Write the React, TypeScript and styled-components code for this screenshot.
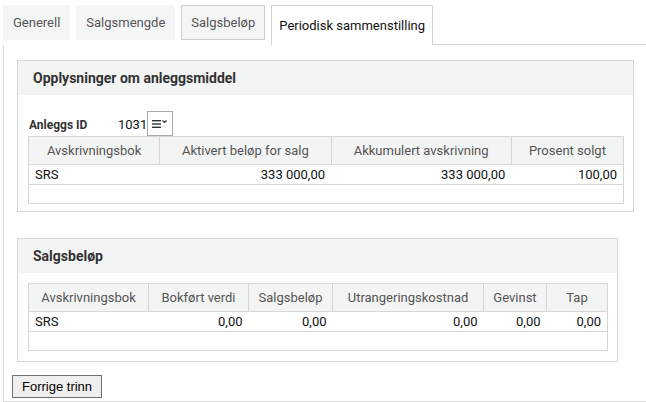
import React from 'react';
import styled, { createGlobalStyle } from 'styled-components';

const GlobalStyle = createGlobalStyle`
  html, body {
    margin: 0;
    padding: 0;
    background: #ffffff;
  }
  body {
    font-family: Roboto, 'Liberation Sans', Arial, sans-serif;
    color: #333333;
  }
`;

const Page = styled.div`
  width: 643px;
  padding: 5px 0 0 3px;
`;

const TabStrip = styled.div`
  display: flex;
  align-items: flex-start;
  column-gap: 6px;
  height: 40px;
`;

const Tab = styled.div<{ $active?: boolean; $outlined?: boolean }>`
  box-sizing: border-box;
  height: ${(p) => (p.$active ? '40px' : '35px')};
  padding: 0 ${(p) => (p.$active ? '7px' : '9px')};
  display: flex;
  align-items: center;
  font-size: 13px;
  color: ${(p) => (p.$active ? '#111111' : '#555555')};
  background: ${(p) => (p.$active ? '#ffffff' : '#f4f5f5')};
  border: 1px solid ${(p) => (p.$active ? '#d2d2d2' : p.$outlined ? '#cfcfcf' : '#f4f5f5')};
  border-bottom: ${(p) => (p.$active ? 'none' : undefined)};
  position: relative;
  z-index: 1;
`;

const TabFiller = styled.div`
  flex: 1;
  align-self: flex-end;
  height: 1px;
  margin-left: -6px;
  background: #d2d2d2;
`;

const Panel = styled.div`
  border-left: 1px solid #d9d9d9;
  border-bottom: 1px solid #d9d9d9;
  padding: 15px 0 3px 13px;
`;

const Section = styled.section<{ $width: number }>`
  width: ${(p) => p.$width}px;
  box-sizing: border-box;
  border: 1px solid #d6d6d6;
  margin-bottom: ${(p) => (p.$width > 610 ? '26px' : '13px')};
`;

const SectionHeader = styled.div`
  height: 34px;
  background: #f3f4f4;
  display: flex;
  align-items: center;
  padding-left: 15px;
  font-size: 14px;
  font-weight: bold;
  color: #333333;
`;

const SectionBody = styled.div<{ $top: number; $bottom: number }>`
  padding: ${(p) => p.$top}px 9px ${(p) => p.$bottom}px 10px;
`;

const FieldRow = styled.div`
  display: flex;
  align-items: center;
  height: 25px;
`;

const FieldLabel = styled.span`
  width: 89px;
  font-size: 12px;
  font-weight: bold;
  color: #333333;
  padding-left: 1px;
  padding-top: 2px;
`;

const FieldValue = styled.span`
  font-size: 13px;
  color: #111111;
  padding-top: 1px;
`;

const MenuButton = styled.button`
  box-sizing: border-box;
  width: 26px;
  height: 25px;
  padding: 0;
  margin: 0;
  border: 1px solid #a9a9a9;
  background: #ffffff;
  display: flex;
  align-items: center;
  justify-content: center;
`;

const Table = styled.table`
  width: 100%;
  border-collapse: collapse;
  table-layout: fixed;
  font-size: 13px;
`;

const HeadCell = styled.th`
  height: 27px;
  padding: 0 4px;
  background: #f3f4f4;
  border: 1px solid #d6d6d6;
  font-weight: normal;
  color: #555555;
  text-align: center;
  white-space: nowrap;
`;

const Cell = styled.td<{ $align?: 'left' | 'right' }>`
  height: 19px;
  padding: 0 6px;
  border-top: 1px solid #d6d6d6;
  border-bottom: 1px solid #d6d6d6;
  text-align: ${(p) => p.$align || 'right'};
  color: #111111;
  white-space: nowrap;
  &:first-child {
    border-left: 1px solid #d6d6d6;
  }
  &:last-child {
    border-right: 1px solid #d6d6d6;
  }
`;

const EmptyCell = styled.td`
  height: 16px;
  border: 1px solid #d6d6d6;
`;

const Footer = styled.div`
  margin-left: -5px;
`;

const StepButton = styled.button`
  box-sizing: border-box;
  height: 23px;
  padding: 0 9px;
  font-family: 'Liberation Sans', Arial, sans-serif;
  font-size: 13px;
  color: #000000;
  background: #efefef;
  border: 1px solid #707070;
`;

const MenuIcon = () => (
  <svg width="18" height="10" viewBox="0 0 18 10">
    <rect x="1" y="1" width="9" height="1.4" fill="#333" />
    <rect x="1" y="4.3" width="9" height="1.4" fill="#333" />
    <rect x="1" y="7.6" width="9" height="1.4" fill="#333" />
    <path d="M11.5 1.5 L13.5 3.5 L15.5 1.5" stroke="#333" strokeWidth="1.2" fill="none" />
  </svg>
);

type Column = { title: string; width: number };

const assetColumns: Column[] = [
  { title: 'Avskrivningsbok', width: 131 },
  { title: 'Aktivert beløp for salg', width: 171 },
  { title: 'Akkumulert avskrivning', width: 180 },
  { title: 'Prosent solgt', width: 112 },
];
const assetRow = ['SRS', '333 000,00', '333 000,00', '100,00'];

const saleColumns: Column[] = [
  { title: 'Avskrivningsbok', width: 120 },
  { title: 'Bokført verdi', width: 100 },
  { title: 'Salgsbeløp', width: 84 },
  { title: 'Utrangeringskostnad', width: 151 },
  { title: 'Gevinst', width: 63 },
  { title: 'Tap', width: 61 },
];
const saleRow = ['SRS', '0,00', '0,00', '0,00', '0,00', '0,00'];

const DataTable = ({ columns, row }: { columns: Column[]; row: string[] }) => (
  <Table>
    <colgroup>
      {columns.map((c) => (
        <col key={c.title} style={{ width: c.width }} />
      ))}
    </colgroup>
    <thead>
      <tr>
        {columns.map((c) => (
          <HeadCell key={c.title}>{c.title}</HeadCell>
        ))}
      </tr>
    </thead>
    <tbody>
      <tr>
        {row.map((v, i) => (
          <Cell key={i} $align={i === 0 ? 'left' : 'right'}>
            {v}
          </Cell>
        ))}
      </tr>
      <tr>
        <EmptyCell colSpan={columns.length} />
      </tr>
    </tbody>
  </Table>
);

const App = () => {
  return (
    <Page>
      <GlobalStyle />
      <TabStrip>
        <Tab>Generell</Tab>
        <Tab>Salgsmengde</Tab>
        <Tab $outlined>Salgsbeløp</Tab>
        <Tab $active>Periodisk sammenstilling</Tab>
        <TabFiller />
      </TabStrip>
      <Panel>
        <Section $width={617}>
          <SectionHeader>Opplysninger om anleggsmiddel</SectionHeader>
          <SectionBody $top={16} $bottom={7}>
            <FieldRow>
              <FieldLabel>Anleggs ID</FieldLabel>
              <FieldValue>1031</FieldValue>
              <MenuButton aria-label="Velg">
                <MenuIcon />
              </MenuButton>
            </FieldRow>
            <DataTable columns={assetColumns} row={assetRow} />
          </SectionBody>
        </Section>
        <Section $width={601}>
          <SectionHeader>Salgsbeløp</SectionHeader>
          <SectionBody $top={10} $bottom={10}>
            <DataTable columns={saleColumns} row={saleRow} />
          </SectionBody>
        </Section>
        <Footer>
          <StepButton>Forrige trinn</StepButton>
        </Footer>
      </Panel>
    </Page>
  );
};

export default App;
